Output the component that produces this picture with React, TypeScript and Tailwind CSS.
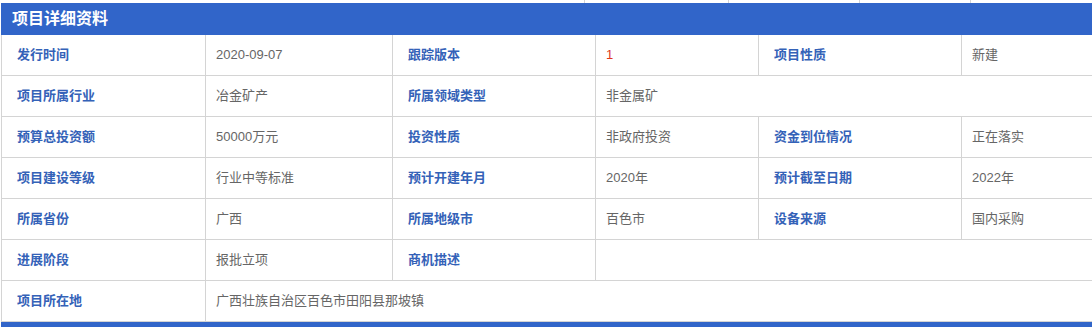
const rows: { cells: { text: string; label?: boolean; red?: boolean; span?: string }[] }[] = [
  {
    cells: [
      { text: '发行时间', label: true },
      { text: '2020-09-07' },
      { text: '跟踪版本', label: true },
      { text: '1', red: true },
      { text: '项目性质', label: true },
      { text: '新建' },
    ],
  },
  {
    cells: [
      { text: '项目所属行业', label: true },
      { text: '冶金矿产' },
      { text: '所属领域类型', label: true },
      { text: '非金属矿', span: 'col-span-3' },
    ],
  },
  {
    cells: [
      { text: '预算总投资额', label: true },
      { text: '50000万元' },
      { text: '投资性质', label: true },
      { text: '非政府投资' },
      { text: '资金到位情况', label: true },
      { text: '正在落实' },
    ],
  },
  {
    cells: [
      { text: '项目建设等级', label: true },
      { text: '行业中等标准' },
      { text: '预计开建年月', label: true },
      { text: '2020年' },
      { text: '预计截至日期', label: true },
      { text: '2022年' },
    ],
  },
  {
    cells: [
      { text: '所属省份', label: true },
      { text: '广西' },
      { text: '所属地级市', label: true },
      { text: '百色市' },
      { text: '设备来源', label: true },
      { text: '国内采购' },
    ],
  },
  {
    cells: [
      { text: '进展阶段', label: true },
      { text: '报批立项' },
      { text: '商机描述', label: true },
      { text: '', span: 'col-span-3' },
    ],
  },
  {
    cells: [
      { text: '项目所在地', label: true },
      { text: '广西壮族自治区百色市田阳县那坡镇', span: 'col-span-5' },
    ],
  },
];

export default function App() {
  return (
    <div
      className="w-[1092px] h-[327px] overflow-hidden bg-white"
      style={{ fontFamily: '"Liberation Sans", "Noto Sans CJK SC", sans-serif' }}
    >
      {/* leftover of the table above */}
      <div className="flex h-[3px]">
        <div className="w-[585px] border-r border-[#d4d4d4]" />
        <div className="w-[144px] border-r border-[#d4d4d4]" />
        <div className="w-[131px] border-r border-[#d4d4d4]" />
        <div className="w-[111px] border-r border-[#d4d4d4]" />
      </div>

      {/* title bar */}
      <div className="ml-px h-[32px] bg-[#3165c9] flex items-center pl-[11px]">
        <span className="text-white text-[16px] font-bold">项目详细资料</span>
      </div>

      {/* detail grid */}
      <div className="ml-px border-l border-[#d4d4d4] grid grid-cols-[204px_187px_203px_163px_203px_1fr]">
        {rows.map((row, i) =>
          row.cells.map((c, j) => (
            <div
              key={`${i}-${j}`}
              className={`h-[41px] flex items-center border-b border-[#d4d4d4] text-[13px] ${
                j < row.cells.length - 1 ? 'border-r' : ''
              } ${c.span ?? ''} ${
                c.label
                  ? 'font-bold text-[#3462b8] pl-[15px]'
                  : c.red
                    ? 'text-[#e0361c] pl-[10px]'
                    : 'text-[#666666] pl-[10px]'
              }`}
            >
              {c.text}
            </div>
          ))
        )}
      </div>

      {/* next section title */}
      <div className="ml-px h-[8px] bg-[#3165c9]" />
    </div>
  );
}
